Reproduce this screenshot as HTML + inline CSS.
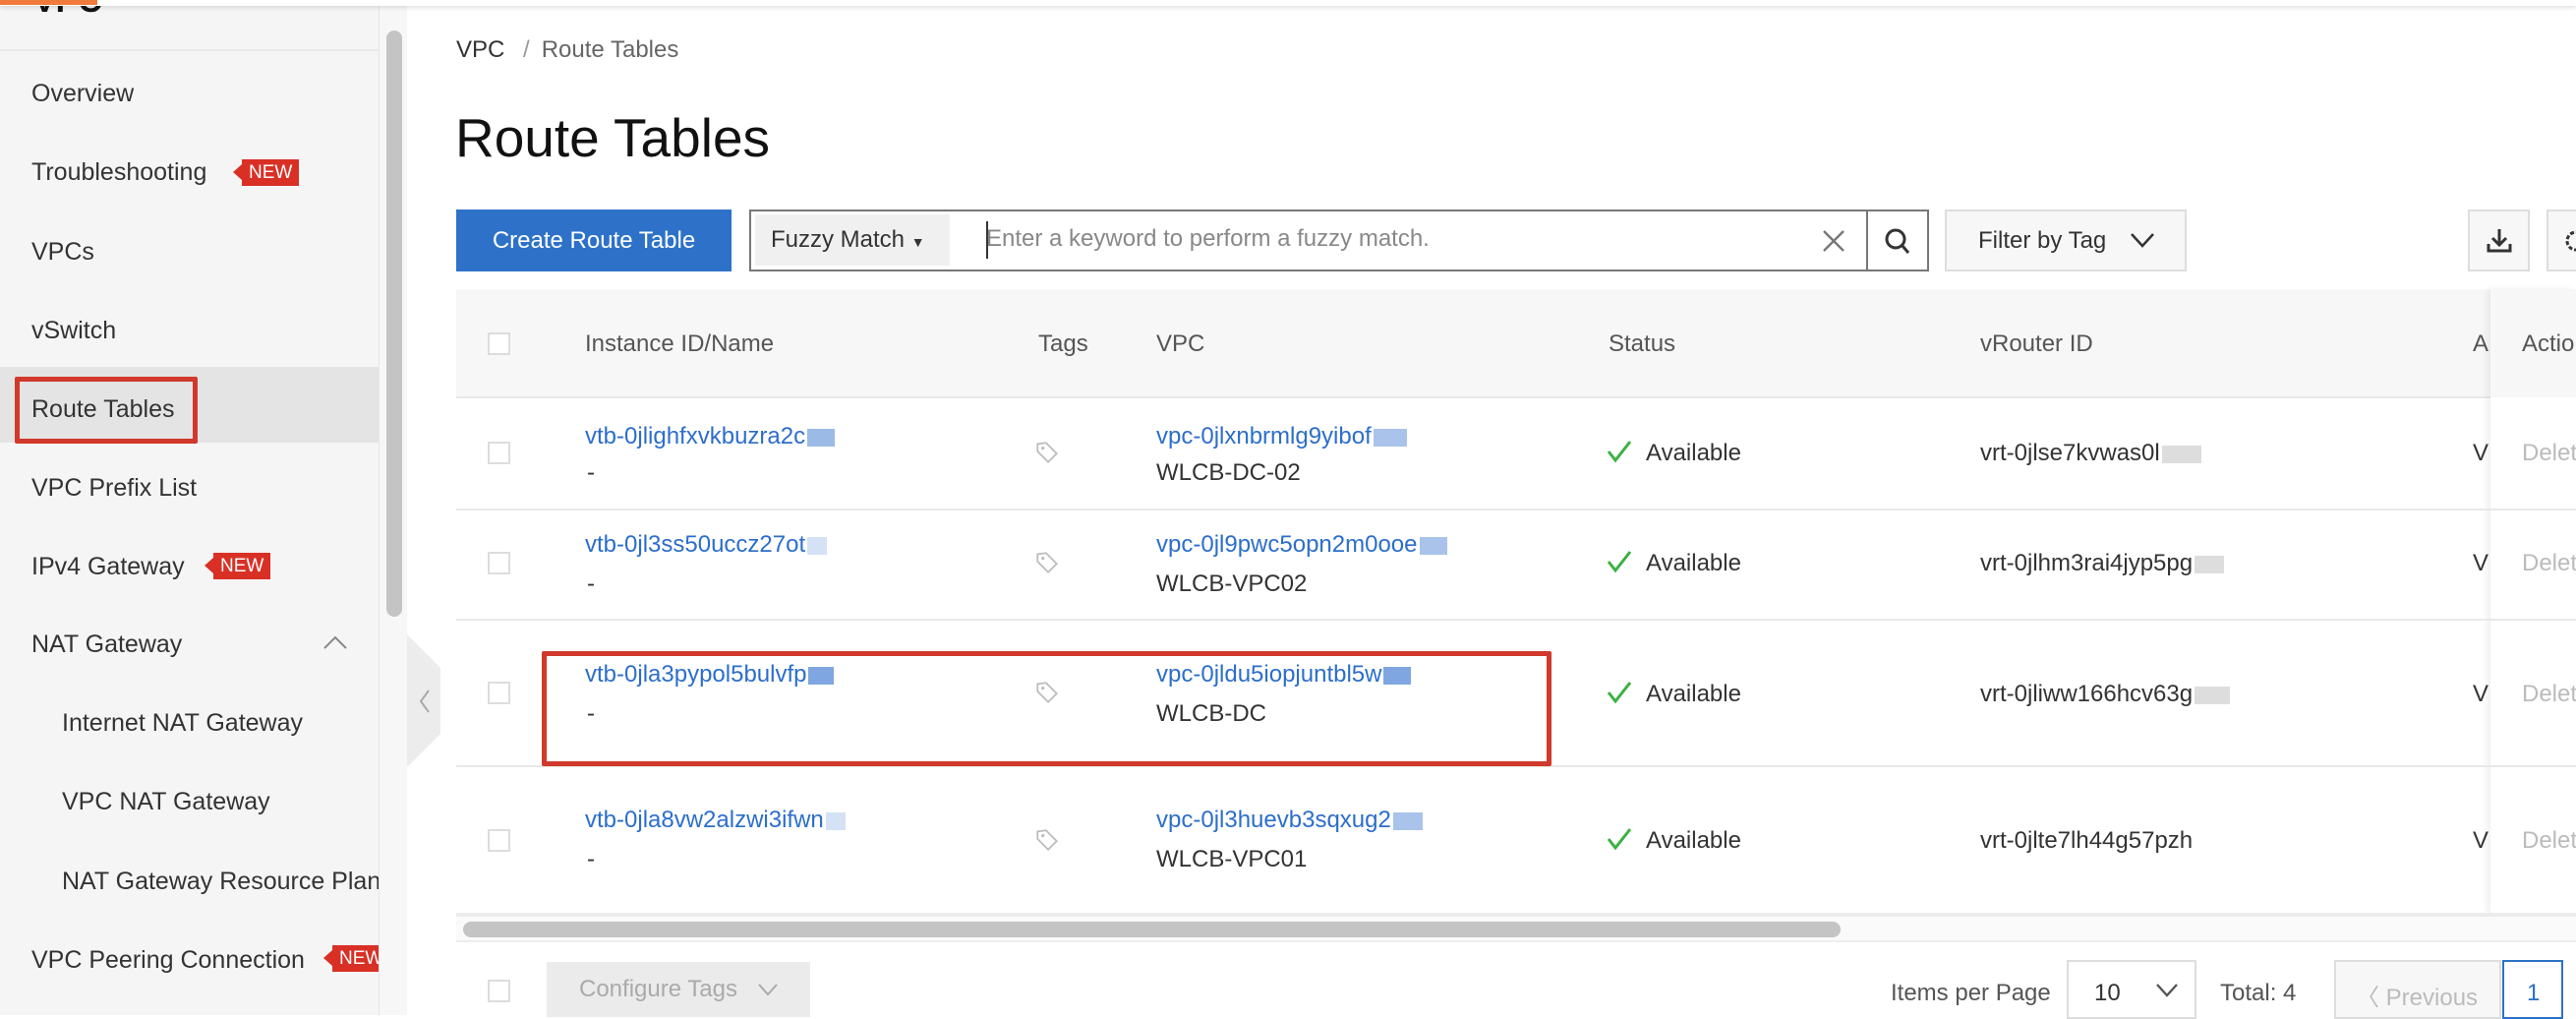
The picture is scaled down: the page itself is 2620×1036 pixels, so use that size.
<!DOCTYPE html>
<html><head><meta charset="utf-8"><style>
*{margin:0;padding:0;box-sizing:border-box}
body{width:2620px;height:1032px;overflow:hidden;background:#fff;font-family:"Liberation Sans",Arial,sans-serif;font-size:24px;color:#333;position:relative}
.a{position:absolute;white-space:nowrap}
.side{position:absolute;left:0;top:0;width:386px;height:1032px;background:#f5f5f5;border-right:1px solid #e6e6e6;overflow:hidden}
.si{position:absolute;left:32px;font-size:25px;color:#333;line-height:30px;white-space:nowrap}
.badge{position:absolute;background:#d93026;color:#fff;font-size:19px;line-height:27px;height:27px;padding:0 7px;white-space:nowrap}
.badge:before{content:"";position:absolute;left:-9px;top:5px;border-right:9px solid #d93026;border-top:8px solid transparent;border-bottom:8px solid transparent}
.lk{color:#2c6ecb}
.cb{position:absolute;width:23px;height:23px;border:2px solid #ddd;background:#fff}
.hl{position:absolute;left:464px;width:2156px;height:2px;background:#e8e8e8}
.blob{display:inline-block;height:18px;vertical-align:middle;margin-left:2px}
.ok{display:inline-block;width:26px;height:24px;vertical-align:-3px;margin-right:14px}
.del{color:#bbb}
</style></head><body>
<div class="a" style="left:0;top:0;width:2620px;height:6px;background:#fff;box-shadow:0 2px 4px rgba(0,0,0,.12);z-index:3"></div>
<div class="a" style="left:0;top:0;width:99px;height:5px;background:#f07a3a;z-index:4"></div>
<svg width="0" height="0" style="position:absolute"><defs>
<symbol id="tag" viewBox="0 0 24 24"><path d="M3 4 L11 3 L21 13 L13 21 L3 11 Z" fill="none" stroke="#bbb" stroke-width="1.6"/><circle cx="8" cy="8" r="1.5" fill="#bbb"/></symbol>
<symbol id="chk" viewBox="0 0 26 24"><path d="M2 12 L9 21 L24 2" fill="none" stroke="#3cb043" stroke-width="3"/></symbol>
</defs></svg>
<div class="side">
  <div class="a" style="left:34px;top:-18px;font-weight:bold;font-size:34px;color:#111">VPC</div>
  <div class="a" style="left:0;top:50px;width:386px;height:2px;background:#e8e8e8"></div>
  <div class="si" style="top:80px">Overview</div>
  <div class="si" style="top:160px">Troubleshooting</div>
  <div class="badge" style="left:246px;top:162px">NEW</div>
  <div class="si" style="top:241px">VPCs</div>
  <div class="si" style="top:321px">vSwitch</div>
  <div class="a" style="left:0;top:373px;width:386px;height:77px;background:#e4e4e4"></div>
  <div class="a" style="left:15px;top:383px;width:186px;height:68px;border:5px solid #d0392b;border-radius:2px"></div>
  <div class="si" style="top:401px">Route Tables</div>
  <div class="si" style="top:481px">VPC Prefix List</div>
  <div class="si" style="top:561px">IPv4 Gateway</div>
  <div class="badge" style="left:217px;top:562px">NEW</div>
  <div class="si" style="top:640px">NAT Gateway</div>
  <svg class="a" style="left:328px;top:644px" width="26" height="18" viewBox="0 0 26 18"><path d="M2 15 L13 4 L24 15" fill="none" stroke="#888" stroke-width="2"/></svg>
  <div class="si" style="left:63px;top:720px">Internet NAT Gateway</div>
  <div class="si" style="left:63px;top:800px">VPC NAT Gateway</div>
  <div class="si" style="left:63px;top:881px">NAT Gateway Resource Plan</div>
  <div class="si" style="top:961px">VPC Peering Connection</div>
  <div class="badge" style="left:338px;top:961px">NEW</div>
</div>
<div class="a" style="left:386px;top:0;width:28px;height:1032px;background:#f7f7f7"></div>
<div class="a" style="left:393px;top:31px;width:16px;height:596px;background:#c4c4c4;border-radius:8px"></div>
<svg class="a" style="left:414px;top:645px" width="34" height="135" viewBox="0 0 34 135"><path d="M0 0 L34 34 L34 101 L0 135 Z" fill="#ececec"/><path d="M22 57 L14 68 L22 79" fill="none" stroke="#aaa" stroke-width="2"/></svg>

<div class="a" style="left:464px;top:37px;font-size:24px;color:#333">VPC <span style="color:#999;margin:0 12px">/</span><span style="color:#666">Route Tables</span></div>
<div class="a" style="left:463px;top:108px;font-size:55px;color:#111">Route Tables</div>

<div class="a" style="left:464px;top:213px;width:280px;height:63px;background:#2d72c8;color:#fff;text-align:center;line-height:63px">Create Route Table</div>
<div class="a" style="left:762px;top:213px;width:1200px;height:63px;border:2px solid #777;background:#fff"></div>
<div class="a" style="left:768px;top:218px;width:198px;height:52px;background:#f0f0f0;line-height:52px;padding-left:16px">Fuzzy Match <span style="font-size:14px">▼</span></div>
<div class="a" style="left:1003px;top:225px;width:2px;height:38px;background:#333"></div>
<div class="a" style="left:1003px;top:229px;color:#888">Enter a keyword to perform a fuzzy match.</div>
<svg class="a" style="left:1852px;top:232px" width="26" height="26" viewBox="0 0 26 26"><path d="M3 3 L23 23 M23 3 L3 23" stroke="#777" stroke-width="2.4"/></svg>
<div class="a" style="left:1898px;top:213px;width:2px;height:63px;background:#777"></div>
<svg class="a" style="left:1915px;top:230px" width="30" height="30" viewBox="0 0 30 30"><circle cx="13" cy="13" r="9" fill="none" stroke="#333" stroke-width="3"/><path d="M20 20 L26 27" stroke="#333" stroke-width="3"/></svg>
<div class="a" style="left:1978px;top:213px;width:246px;height:63px;border:2px solid #ddd;background:#f7f7f7;line-height:59px;padding-left:32px">Filter by Tag</div>
<svg class="a" style="left:2166px;top:234px" width="26" height="20" viewBox="0 0 26 20"><path d="M2 4 L13 16 L24 4" fill="none" stroke="#333" stroke-width="2.5"/></svg>
<div class="a" style="left:2510px;top:213px;width:63px;height:63px;border:2px solid #ddd;background:#f7f7f7"></div>
<svg class="a" style="left:2528px;top:231px" width="28" height="28" viewBox="0 0 28 28"><path d="M14 2 L14 18 M7 11 L14 18 L21 11 M3 17 L3 24 L25 24 L25 17" fill="none" stroke="#333" stroke-width="3"/></svg>
<div class="a" style="left:2590px;top:213px;width:60px;height:63px;border:2px solid #ddd;background:#f7f7f7"></div>
<svg class="a" style="left:2606px;top:230px" width="20" height="30" viewBox="0 0 20 30"><circle cx="14" cy="15" r="9" fill="none" stroke="#333" stroke-width="3" stroke-dasharray="4 2"/></svg>

<div class="a" style="left:464px;top:294px;width:2156px;height:110px;background:#f7f7f7"></div>
<div class="hl" style="top:403px"></div>
<div class="cb" style="left:496px;top:338px;border-color:#ddd"></div>
<div class="a" style="left:595px;top:336px;color:#555">Instance ID/Name</div>
<div class="a" style="left:1056px;top:336px;color:#555">Tags</div>
<div class="a" style="left:1176px;top:336px;color:#555">VPC</div>
<div class="a" style="left:1636px;top:336px;color:#555">Status</div>
<div class="a" style="left:2014px;top:336px;color:#555">vRouter ID</div>
<div class="a" style="left:2515px;top:336px;color:#555">A</div>
<div class="a" style="left:2533px;top:294px;width:87px;height:635px;background:#fff;box-shadow:-4px 0 6px rgba(0,0,0,.06)"></div>
<div class="a" style="left:2533px;top:294px;width:87px;height:110px;background:#f7f7f7"></div>
<div class="a" style="left:2565px;top:336px;color:#555">Actions</div>

<div class="hl" style="top:517px"></div>
<div class="hl" style="top:629px"></div>
<div class="hl" style="top:778px"></div>

<div class="cb" style="left:496px;top:449px"></div>
<div class="a lk" style="left:595px;top:430px">vtb-0jlighfxvkbuzra2c<span class="blob" style="width:28px;background:#9bbbe6"></span></div>
<div class="a" style="left:597px;top:467px">-</div>
<svg class="a" style="left:1052px;top:447px" width="26" height="26"><use href="#tag"/></svg>
<div class="a lk" style="left:1176px;top:430px">vpc-0jlxnbrmlg9yibof<span class="blob" style="width:34px;background:#a9c3ea"></span></div>
<div class="a" style="left:1176px;top:467px">WLCB-DC-02</div>
<div class="a" style="left:1634px;top:447px"><svg class="ok"><use href="#chk"/></svg>Available</div>
<div class="a" style="left:2014px;top:447px">vrt-0jlse7kvwas0l<span class="blob" style="width:40px;background:#ddd"></span></div>
<div class="a" style="left:2515px;top:447px">V</div>
<div class="a del" style="left:2565px;top:447px">Delete</div>

<div class="cb" style="left:496px;top:561px"></div>
<div class="a lk" style="left:595px;top:540px">vtb-0jl3ss50uccz27ot<span class="blob" style="width:20px;background:#d5e2f5"></span></div>
<div class="a" style="left:597px;top:580px">-</div>
<svg class="a" style="left:1052px;top:559px" width="26" height="26"><use href="#tag"/></svg>
<div class="a lk" style="left:1176px;top:540px">vpc-0jl9pwc5opn2m0ooe<span class="blob" style="width:28px;background:#a9c3ea"></span></div>
<div class="a" style="left:1176px;top:580px">WLCB-VPC02</div>
<div class="a" style="left:1634px;top:559px"><svg class="ok"><use href="#chk"/></svg>Available</div>
<div class="a" style="left:2014px;top:559px">vrt-0jlhm3rai4jyp5pg<span class="blob" style="width:30px;background:#ddd"></span></div>
<div class="a" style="left:2515px;top:559px">V</div>
<div class="a del" style="left:2565px;top:559px">Delete</div>

<div class="cb" style="left:496px;top:693px"></div>
<div class="a lk" style="left:595px;top:672px">vtb-0jla3pypol5bulvfp<span class="blob" style="width:26px;background:#7fa6e0"></span></div>
<div class="a" style="left:597px;top:712px">-</div>
<svg class="a" style="left:1052px;top:691px" width="26" height="26"><use href="#tag"/></svg>
<div class="a lk" style="left:1176px;top:672px">vpc-0jldu5iopjuntbl5w<span class="blob" style="width:28px;background:#7fa6e0"></span></div>
<div class="a" style="left:1176px;top:712px">WLCB-DC</div>
<div class="a" style="left:1634px;top:692px"><svg class="ok"><use href="#chk"/></svg>Available</div>
<div class="a" style="left:2014px;top:692px">vrt-0jliww166hcv63g<span class="blob" style="width:36px;background:#ddd"></span></div>
<div class="a" style="left:2515px;top:692px">V</div>
<div class="a del" style="left:2565px;top:692px">Delete</div>
<div class="a" style="left:551px;top:662px;width:1027px;height:117px;border:5px solid #d0392b;border-radius:2px"></div>

<div class="cb" style="left:496px;top:843px"></div>
<div class="a lk" style="left:595px;top:820px">vtb-0jla8vw2alzwi3ifwn<span class="blob" style="width:20px;background:#d5e2f5"></span></div>
<div class="a" style="left:597px;top:860px">-</div>
<svg class="a" style="left:1052px;top:841px" width="26" height="26"><use href="#tag"/></svg>
<div class="a lk" style="left:1176px;top:820px">vpc-0jl3huevb3sqxug2<span class="blob" style="width:30px;background:#a9c3ea"></span></div>
<div class="a" style="left:1176px;top:860px">WLCB-VPC01</div>
<div class="a" style="left:1634px;top:841px"><svg class="ok"><use href="#chk"/></svg>Available</div>
<div class="a" style="left:2014px;top:841px">vrt-0jlte7lh44g57pzh</div>
<div class="a" style="left:2515px;top:841px">V</div>
<div class="a del" style="left:2565px;top:841px">Delete</div>

<div class="a" style="left:464px;top:928px;width:2156px;height:4px;background:#ececec"></div>
<div class="a" style="left:464px;top:932px;width:2156px;height:26px;background:#fafafa;border-bottom:2px solid #eee"></div>
<div class="a" style="left:471px;top:937px;width:1401px;height:16px;background:#c4c4c4;border-radius:8px"></div>

<div class="cb" style="left:496px;top:996px"></div>
<div class="a" style="left:556px;top:978px;width:268px;height:56px;background:#ebebeb;color:#aaa;line-height:56px;padding-left:33px">Configure Tags</div>
<svg class="a" style="left:770px;top:998px" width="22" height="16" viewBox="0 0 22 16"><path d="M2 3 L11 13 L20 3" fill="none" stroke="#aaa" stroke-width="2"/></svg>
<div class="a" style="left:1923px;top:996px;color:#555">Items per Page</div>
<div class="a" style="left:2102px;top:976px;width:132px;height:60px;border:2px solid #ddd"></div>
<div class="a" style="left:2130px;top:996px">10</div>
<svg class="a" style="left:2192px;top:998px" width="24" height="18" viewBox="0 0 24 18"><path d="M2 3 L12 14 L22 3" fill="none" stroke="#555" stroke-width="2.4"/></svg>
<div class="a" style="left:2258px;top:996px;color:#555">Total: 4</div>
<div class="a" style="left:2374px;top:976px;width:170px;height:60px;border:2px solid #ddd;background:#f7f7f7"></div>
<div class="a" style="left:2396px;top:994px;color:#bbb">〈 Previous</div>
<div class="a" style="left:2545px;top:976px;width:62px;height:60px;border:2px solid #2d72c8;background:#fff"></div>
<div class="a lk" style="left:2570px;top:996px">1</div>
</body></html>
